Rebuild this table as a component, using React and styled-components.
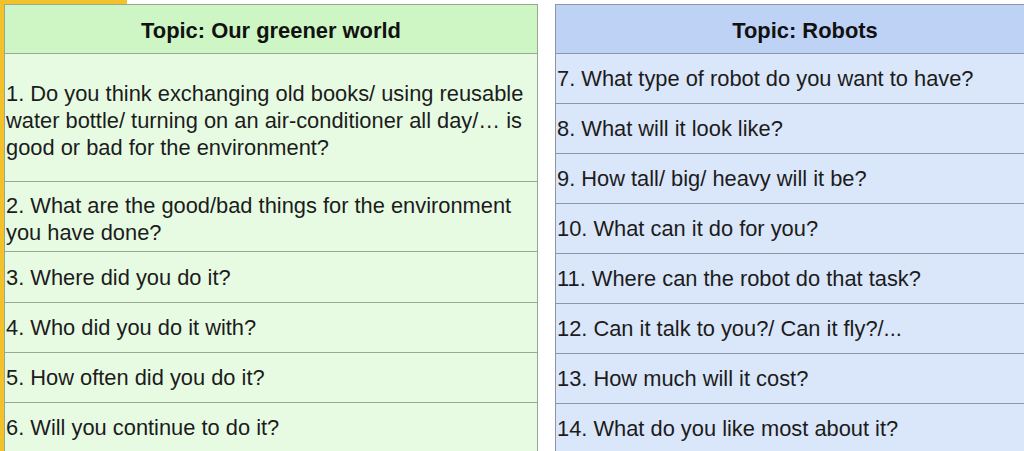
import * as React from 'react';
import styled, { createGlobalStyle } from 'styled-components';

const leftRows = [
    { text: '1. Do you think exchanging old books/ using reusable water bottle/ turning on an air-conditioner all day/… is good or bad for the environment?', h: 128, shift: 6 },
    { text: '2. What are the good/bad things for the environment you have done?', h: 70, shift: 4 },
    { text: '3. Where did you do it?', h: 51, shift: 0 },
    { text: '4. Who did you do it with?', h: 50, shift: 0 },
    { text: '5. How often did you do it?', h: 50, shift: 0 },
    { text: '6. Will you continue to do it?', h: 50, shift: 0 },
];

const rightRows = [
    '7. What type of robot do you want to have?',
    '8. What will it look like?',
    '9. How tall/ big/ heavy will it be?',
    '10. What can it do for you?',
    '11. Where can the robot do that task?',
    '12. Can it talk to you?/ Can it fly?/...',
    '13. How much will it cost?',
    '14. What do you like most about it?',
];

const themes = {
    green: { head: '#cdf6c4', body: '#e7fbe3', line: '#97a894' },
    blue: { head: '#bdd2f5', body: '#dae6f9', line: '#8c96a6' },
};

export default function App() {
    return (
        <>
            <GlobalStyle />
            <Page>
                <Accent />
                <Tables>
                    <Table tone="green" width={534}>
                        <Head tone="green">Topic: Our greener world</Head>
                        {leftRows.map((r) => (
                            <Row key={r.text} tone="green" h={r.h} shift={r.shift}>{r.text}</Row>
                        ))}
                    </Table>
                    <Table tone="blue" width={500}>
                        <Head tone="blue">Topic: Robots</Head>
                        {rightRows.map((t) => (
                            <Row key={t} tone="blue" h={50} shift={0}>{t}</Row>
                        ))}
                    </Table>
                </Tables>
            </Page>
        </>
    );
}

const GlobalStyle = createGlobalStyle`
    html, body {
        margin: 0;
        padding: 0;
        background: #ffffff;
        overflow: hidden;
    }
    body {
        font-family: "Liberation Sans", Arial, sans-serif;
    }
`;

const Page = styled.div`
    width: 1020px;
    height: 451px;
    border-left: 4px solid #f3c22b;
    display: flex;
    flex-direction: column;
    overflow: hidden;
`;

const Accent = styled.div`
    width: 123px;
    height: 4px;
    flex: none;
    background: #f3c22b;
`;

const Tables = styled.div`
    display: flex;
    gap: 17px;
    align-items: flex-start;
`;

const Table = styled.div`
    width: ${(p) => p.width}px;
    flex: none;
    display: flex;
    flex-direction: column;
    box-sizing: border-box;
    border: 1px solid ${(p) => themes[p.tone].line};
    background: ${(p) => themes[p.tone].body};
`;

const Head = styled.div`
    height: 49px;
    box-sizing: border-box;
    border-bottom: 1px solid ${(p) => themes[p.tone].line};
    background: ${(p) => themes[p.tone].head};
    display: flex;
    align-items: center;
    justify-content: center;
    font-size: 21.9px;
    font-weight: bold;
    color: #111111;
    padding-top: 3px;
`;

const Row = styled.div`
    min-height: ${(p) => p.h}px;
    box-sizing: border-box;
    border-bottom: 1px solid ${(p) => themes[p.tone].line};
    display: flex;
    align-items: center;
    padding: ${(p) => p.shift}px 0 0 1px;
    font-size: 21.85px;
    line-height: 27px;
    color: #1c1c1c;
`;
